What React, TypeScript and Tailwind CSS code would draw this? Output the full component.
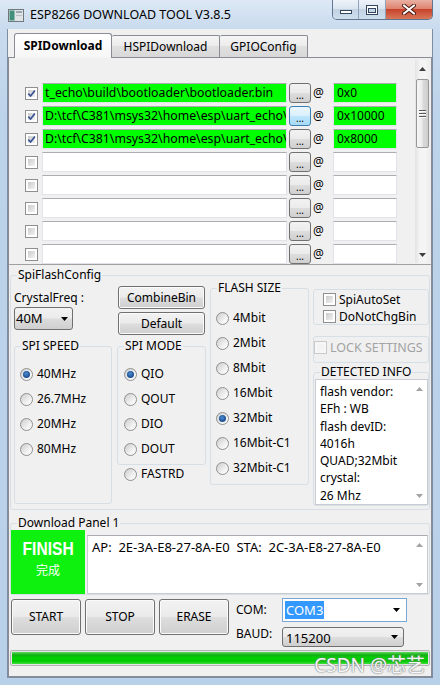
import React from "react"

type Kids = { children?: React.ReactNode; className?: string }

const files = [
  { on: true, path: "t_echo\\build\\bootloader\\bootloader.bin", addr: "0x0" },
  { on: true, path: "D:\\tcf\\C381\\msys32\\home\\esp\\uart_echo\\", addr: "0x10000", hot: true },
  { on: true, path: "D:\\tcf\\C381\\msys32\\home\\esp\\uart_echo\\", addr: "0x8000" },
  { on: false, path: "", addr: "" },
  { on: false, path: "", addr: "" },
  { on: false, path: "", addr: "" },
  { on: false, path: "", addr: "" },
  { on: false, path: "", addr: "" },
]

const info = ["flash vendor:", "EFh : WB", "flash devID:", "4016h", "QUAD;32Mbit", "crystal:", "26 Mhz"]

function Arrow({ dir, color = "#404040" }: { dir: "up" | "down"; color?: string }) {
  return (
    <svg width="7" height="4" viewBox="0 0 7 4">
      <path d={dir === "up" ? "M0 4 L3.5 0 L7 4 Z" : "M0 0 L7 0 L3.5 4 Z"} fill={color} />
    </svg>
  )
}

function Check({ on = false, disabled = false }: { on?: boolean; disabled?: boolean }) {
  return (
    <span
      className={`flex h-[13px] w-[13px] shrink-0 items-center justify-center border p-[2px] ${
        disabled ? "border-[#cacaca] bg-[#f7f7f7]" : "border-[#8e8f8f] bg-white"
      }`}
    >
      <span
        className={`relative flex h-full w-full items-center justify-center ${
          disabled ? "bg-[#f3f3f3]" : "bg-[linear-gradient(135deg,#cbcbcb,#f2f2f2)]"
        }`}
      >
        {on && (
          <svg className="absolute" width="9" height="9" viewBox="0 0 9 9">
            <path d="M1.3 4.6 L3.6 7 L7.9 1.5" fill="none" stroke="#3a5296" strokeWidth="1.7" />
          </svg>
        )}
      </span>
    </span>
  )
}

function Radio({ on = false, label }: { on?: boolean; label: string }) {
  return (
    <div className="flex h-[16px] items-center whitespace-nowrap">
      <span className="flex h-[13px] w-[13px] shrink-0 items-center justify-center rounded-full border border-[#8e8f8f] bg-[linear-gradient(135deg,#cdcdcd,#f5f5f5_70%,#ffffff)]">
        {on && (
          <span className="h-[7px] w-[7px] rounded-full bg-[radial-gradient(circle_at_45%_40%,#4a8fd8,#1c4c8c_65%,#6a9fd6)]" />
        )}
      </span>
      <span className="ml-[4px]">{label}</span>
    </div>
  )
}

function Btn({ children, className = "" }: Kids) {
  return (
    <div
      className={`flex items-center justify-center rounded-[3px] border border-[#707070] bg-[linear-gradient(#f2f2f2,#ebebeb_48%,#dddddd_52%,#cfcfcf)] shadow-[inset_0_0_0_1px_#fbfbfb] ${className}`}
    >
      {children}
    </div>
  )
}

function Group({ title, className = "", legend = "leading-[14px]", children }: Kids & { title: string; legend?: string }) {
  return (
    <fieldset className={`rounded-[3px] border border-[#d5dfe5] ${className}`}>
      <legend className={`ml-[6px] px-[1px] ${legend}`}>{title}</legend>
      {children}
    </fieldset>
  )
}

function VScroll({ thumb = false, plain = false, className = "" }: { thumb?: boolean; plain?: boolean; className?: string }) {
  return (
    <div
      className={`flex w-[15px] shrink-0 flex-col ${
        plain ? "bg-white" : "bg-[linear-gradient(to_right,#e3e3e3,#f3f3f3_30%,#f5f5f5_70%,#ececec)]"
      } ${className}`}
    >
      <div className="flex h-[17px] items-center justify-center">
        <Arrow dir="up" color={plain ? "#a3a3a3" : "#404040"} />
      </div>
      {thumb && (
        <div className="mx-auto mt-[2px] flex h-[69px] w-[13px] flex-col items-center justify-center gap-[2px] rounded-[2px] border border-[#979797] bg-[linear-gradient(to_right,#f6f6f6,#ececec_45%,#dadada_55%,#cdcdcd)]">
          {[0, 1, 2].map((i) => (
            <span key={i} className="h-[1px] w-[7px] bg-[#5a5a5a] shadow-[0_1px_0_#ffffff]" />
          ))}
        </div>
      )}
      <div className="mt-auto flex h-[17px] items-center justify-center">
        <Arrow dir="down" color={plain ? "#a3a3a3" : "#404040"} />
      </div>
    </div>
  )
}

function Field({ text, green, className = "" }: { text: string; green: boolean; className?: string }) {
  return (
    <div
      className={`h-[20px] shrink-0 overflow-hidden whitespace-nowrap border border-[#e2e3ea] border-t-[#abadb3] leading-[18px] ${
        green ? "bg-[#00ff00]" : "bg-white"
      } ${className}`}
    >
      {text}
    </div>
  )
}

function AppIcon() {
  return (
    <svg width="16" height="13" viewBox="0 0 16 13">
      <rect x="0.5" y="0.5" width="15" height="12" fill="#dfe3e6" stroke="#70777d" />
      <rect x="1.5" y="1.5" width="5" height="10" fill="#3f8f7a" />
      <rect x="8" y="2" width="6" height="2" fill="#9ca6ae" />
      <rect x="8" y="6" width="6" height="1" fill="#b8c0c6" />
    </svg>
  )
}

function CaptionButtons() {
  return (
    <div className="ml-auto mr-[7px] flex h-[20px] overflow-hidden rounded-b-[5px] border border-t-0 border-[#5f7590]">
      <div className="flex w-[26px] items-end justify-center border-r border-[#8ea2ba] bg-[linear-gradient(#eef3f9,#dbe5f0_45%,#c4d3e4_50%,#cfdeed)] pb-[5px]">
        <svg width="12" height="4" viewBox="0 0 12 4">
          <rect x="0.5" y="0.5" width="11" height="3" fill="#ffffff" stroke="#34465d" />
        </svg>
      </div>
      <div className="flex w-[27px] items-center justify-center border-r border-[#8ea2ba] bg-[linear-gradient(#eef3f9,#dbe5f0_45%,#c4d3e4_50%,#cfdeed)]">
        <svg width="12" height="10" viewBox="0 0 12 10">
          <rect x="0.5" y="0.5" width="11" height="9" fill="#ffffff" stroke="#34465d" />
          <rect x="2.5" y="3.5" width="7" height="4" fill="#c7d6e7" stroke="#34465d" />
        </svg>
      </div>
      <div className="flex w-[46px] items-center justify-center bg-[linear-gradient(#eab0a3,#de8470_45%,#c8432c_50%,#d8775a)]">
        <svg width="14" height="11" viewBox="0 0 14 11">
          <path d="M2 1.5 L12 9.5 M12 1.5 L2 9.5" stroke="#4b1a12" strokeWidth="4" strokeLinecap="round" />
          <path d="M2 1.5 L12 9.5 M12 1.5 L2 9.5" stroke="#ffffff" strokeWidth="2.2" strokeLinecap="round" />
        </svg>
      </div>
    </div>
  )
}

export default function App() {
  return (
    <div className="relative h-[685px] w-[440px] overflow-hidden bg-[linear-gradient(#dde9f5,#c9dbee_28px,#bdd3ea_120px,#b9d0e9)] font-['Noto_Sans','Noto_Sans_CJK_SC',sans-serif] text-[12px] text-black">
      {/* title bar */}
      <div className="flex h-[29px] items-start">
        <div className="ml-[8px] mt-[9px]">
          <AppIcon />
        </div>
        <div className="ml-[6px] mt-[6px] text-[12.5px] leading-[18px]">ESP8266 DOWNLOAD TOOL V3.8.5</div>
        <CaptionButtons />
      </div>

      {/* client */}
      <div className="ml-[7px] h-[649px] w-[426px] border-x border-b border-[#7d8ea3] bg-[#f0f0f0]">
        {/* tabs */}
        <div className="flex h-[28px] items-end pl-[6px]">
          <div className="relative z-10 flex h-[25px] w-[98px] translate-y-[1px] items-center justify-center rounded-t-[3px] border border-b-0 border-[#898c95] bg-[linear-gradient(#ffffff,#f6f6f6)] font-bold">
            SPIDownload
          </div>
          <div className="flex h-[22px] w-[108px] items-center justify-center rounded-t-[2px] border border-b-0 border-l-0 border-[#898c95] bg-[linear-gradient(#f5f5f5,#ebebeb_50%,#e0e0e0_50%,#d8d8d8)]">
            HSPIDownload
          </div>
          <div className="flex h-[22px] w-[88px] items-center justify-center rounded-t-[2px] border border-b-0 border-l-0 border-[#898c95] bg-[linear-gradient(#f5f5f5,#ebebeb_50%,#e0e0e0_50%,#d8d8d8)]">
            GPIOConfig
          </div>
        </div>

        {/* pane */}
        <div className="h-[620px] border border-[#898c95]">
          {/* file list */}
          <div className="flex h-[207px] border-b border-[#a0a0a0]">
            <div className="flex flex-1 flex-col gap-[3px] overflow-hidden pl-[16px] pt-[25px]">
              {files.map((f, i) => (
                <div key={i} className="flex h-[20px] shrink-0 items-center">
                  <Check on={f.on} />
                  <Field text={f.path} green={f.on} className="ml-[4px] w-[245px] pl-[2px] text-[12.3px]" />
                  <div
                    className={`ml-[2px] flex h-[20px] w-[22px] shrink-0 items-end justify-center rounded-[3px] border pb-[1px] text-[10px] leading-[12px] ${
                      f.hot
                        ? "border-[#3c7fb1] bg-[linear-gradient(#eaf6fd,#d9f0fc_50%,#bee6fd_50%,#a7d9f5)]"
                        : "border-[#707070] bg-[linear-gradient(#f2f2f2,#ebebeb_48%,#dddddd_52%,#cfcfcf)]"
                    }`}
                  >
                    ...
                  </div>
                  <span className="ml-[2px] w-[13px] shrink-0">@</span>
                  <Field text={f.addr} green={f.on} className="ml-[7px] w-[64px] pl-[3px]" />
                </div>
              ))}
            </div>
            <VScroll thumb className="mb-[1px] mr-[1px] mt-[2px]" />
          </div>

          {/* SpiFlashConfig */}
          <Group title="SpiFlashConfig" legend="leading-[12px]" className="mx-[1px] mt-[4px] h-[241px]">
            <div className="flex items-start pl-[3px]">
              <div className="flex w-[98px] flex-col">
                <div className="mt-[10px] leading-[14px]">CrystalFreq :</div>
                <div className="mt-[2px] flex h-[23px] w-[59px] items-center justify-between rounded-[3px] border border-[#707070] bg-[linear-gradient(#f2f2f2,#ebebeb_48%,#dddddd_52%,#cfcfcf)] pl-[1px] pr-[4px] text-[13px]">
                  <span>40M</span>
                  <Arrow dir="down" color="#000000" />
                </div>
                <Group title="SPI SPEED" className="mt-[9px] h-[165px]">
                  <div className="mt-[13px] flex flex-col gap-[9px] pl-[5px]">
                    <Radio on label="40MHz" />
                    <Radio label="26.7MHz" />
                    <Radio label="20MHz" />
                    <Radio label="80MHz" />
                  </div>
                </Group>
              </div>

              <div className="ml-[5px] flex w-[89px] flex-col">
                <Btn className="ml-[1px] mt-[5px] h-[23px] w-[87px]">CombineBin</Btn>
                <Btn className="ml-[1px] mt-[3px] h-[23px] w-[87px]">Default</Btn>
                <Group title="SPI MODE" className="mt-[4px] h-[126px]">
                  <div className="mt-[13px] flex flex-col gap-[9px] pl-[6px]">
                    <Radio on label="QIO" />
                    <Radio label="QOUT" />
                    <Radio label="DIO" />
                    <Radio label="DOUT" />
                  </div>
                </Group>
                <div className="mt-[1px] pl-[7px]">
                  <Radio label="FASTRD" />
                </div>
              </div>

              <Group title="FLASH SIZE" className="ml-[4px] h-[204px] w-[99px]">
                <div className="mt-[15px] flex flex-col gap-[9px] pl-[5px]">
                  <Radio label="4Mbit" />
                  <Radio label="2Mbit" />
                  <Radio label="8Mbit" />
                  <Radio label="16Mbit" />
                  <Radio on label="32Mbit" />
                  <Radio label="16Mbit-C1" />
                  <Radio label="32Mbit-C1" />
                </div>
              </Group>

              <div className="ml-[4px] flex w-[116px] flex-col">
                <div className="mt-[8px] flex h-[36px] flex-col rounded-[3px] border border-[#d5dfe5] pl-[9px] pt-[1px]">
                  <div className="flex h-[17px] items-center">
                    <Check />
                    <span className="ml-[3px]">SpiAutoSet</span>
                  </div>
                  <div className="flex h-[17px] items-center">
                    <Check />
                    <span className="ml-[3px]">DoNotChgBin</span>
                  </div>
                </div>
                <div className="mt-[11px] flex h-[27px] items-start rounded-[3px] border border-[#d5dfe5] pt-[4px]">
                  <Check disabled />
                  <span className="ml-[3px] text-[12.5px] leading-[13px] text-[#a3a3a3]">LOCK SETTINGS</span>
                </div>
                <Group title="DETECTED INFO" className="mt-[2px]">
                  <div className="ml-[1px] flex h-[126px] border border-[#c9cdd3] bg-white">
                    <div className="flex-1 pl-[4px] pt-[3px] leading-[17.3px]">
                      {info.map((l) => (
                        <div key={l}>{l}</div>
                      ))}
                    </div>
                    <VScroll plain />
                  </div>
                </Group>
              </div>
            </div>
          </Group>

          {/* Download Panel */}
          <Group title="Download Panel 1" className="mx-[1px] mt-[6px]">
            <div className="flex items-start">
              <div className="flex h-[64px] w-[74px] shrink-0 flex-col items-center bg-[#0ef00e] pt-[9px] text-white">
                <span className="inline-block scale-x-[0.82] font-['Liberation_Sans',sans-serif] text-[19px] font-bold leading-[20px]">
                  FINISH
                </span>
                <span className="mt-[4px] text-[12px] leading-[16px]">完成</span>
              </div>
              <div className="ml-[2px] mr-[1px] mt-[5px] flex h-[59px] flex-1 border border-[#c9cdd3] border-t-[#abadb3] bg-white">
                <div className="flex-1 whitespace-pre pl-[4px] pt-[2px] text-[13px] leading-[18px]">
                  AP:  2E-3A-E8-27-8A-E0  STA:  2C-3A-E8-27-8A-E0
                </div>
                <VScroll plain />
              </div>
            </div>
          </Group>

          {/* actions */}
          <div className="mt-[4px] flex h-[48px] items-start">
            <Btn className="ml-[2px] h-[36px] w-[70px]">START</Btn>
            <Btn className="ml-[4px] h-[36px] w-[70px]">STOP</Btn>
            <Btn className="ml-[4px] h-[36px] w-[70px]">ERASE</Btn>
            <div className="-mt-[1px] ml-[7px] flex flex-col">
              <div className="flex h-[24px] items-center">
                <span className="w-[46px]">COM:</span>
                <div className="flex h-[24px] w-[125px] items-center border border-[#7aa7d8] bg-white pl-[2px] pr-[6px]">
                  <span className="bg-[#3399ff] px-[1px] text-[13px] leading-[18px] text-white">COM3</span>
                  <span className="ml-auto flex">
                    <Arrow dir="down" color="#000000" />
                  </span>
                </div>
              </div>
              <div className="mt-[5px] flex h-[20px] items-start">
                <span className="-mt-[1px] w-[46px] leading-[16px]">BAUD:</span>
                <div className="flex h-[20px] w-[122px] items-center justify-between rounded-[3px] border border-[#707070] bg-[linear-gradient(#f2f2f2,#ebebeb_48%,#dddddd_52%,#cfcfcf)] pl-[3px] pr-[5px]">
                  <span className="mt-[2px] text-[13px] leading-[16px]">115200</span>
                  <Arrow dir="down" color="#000000" />
                </div>
              </div>
            </div>
          </div>

          {/* progress */}
          <div className="mx-[1px] mt-[3px] h-[16px] rounded-[2px] border border-[#b2b2b2] bg-[#e6e6e6] p-[1px]">
            <div className="h-full w-full bg-[linear-gradient(#5fd85f,#12b012_25%,#00d400_50%,#00c800_75%,#3ee03e)]" />
          </div>
        </div>
      </div>

      <div className="absolute bottom-[9px] right-[15px] text-[19px] leading-[22px] text-[#f4f6f8] [text-shadow:0_0_1px_#6a6a6a,0_0_2px_#8a8a8a]">
        CSDN @芯艺
      </div>
    </div>
  )
}
